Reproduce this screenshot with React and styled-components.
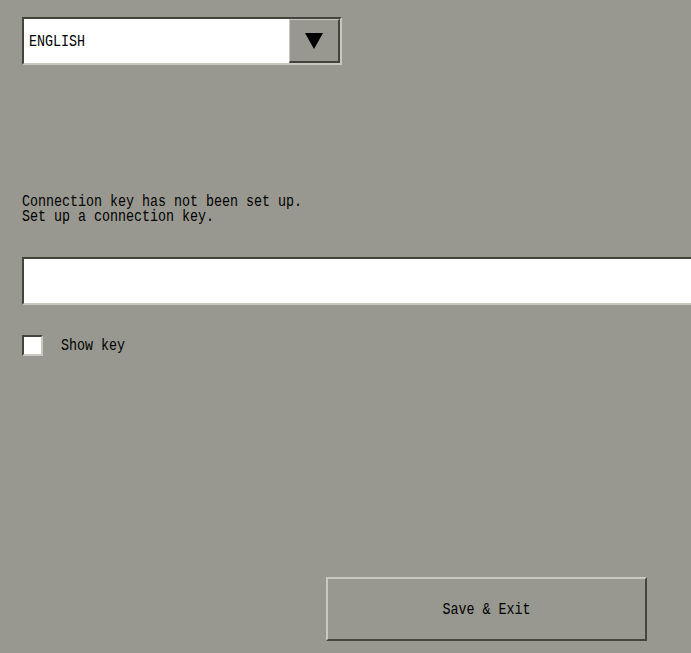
import React from "react";
import styled, { createGlobalStyle } from "styled-components";

const bg = "#989890";
const dark = "#44443c";
const light = "#c8c8c0";

const GlobalStyle = createGlobalStyle`
  html, body {
    margin: 0;
    padding: 0;
    background: ${bg};
  }
  body {
    font-family: "Liberation Mono", "DejaVu Sans Mono", monospace;
    color: #000;
  }
`;

// 화면 전체
const Page = styled.div`
  width: 691px;
  height: 653px;
  box-sizing: border-box;
  padding: 17px 0 12px 22px;
  overflow: hidden;
  display: flex;
  flex-direction: column;
  align-items: flex-start;
`;

// 세로로 늘린 글자 (패널 폰트 흉내)
const Tall = styled.span`
  display: inline-block;
  font-size: 13.33px;
  line-height: 12px;
  height: 12px;
  white-space: pre;
  transform: translateY(1px) scaleY(1.3);
  transform-origin: center;
`;

// 언어 선택 드롭다운
const Select = styled.div`
  width: 320px;
  height: 48px;
  box-sizing: border-box;
  display: flex;
  border-style: solid;
  border-width: 2px;
  border-color: ${dark} ${light} ${light} ${dark};
`;

const SelectValue = styled.div`
  flex: 1;
  background: #fff;
  display: flex;
  align-items: center;
  padding-left: 5px;
`;

const SelectButton = styled.div`
  width: 51px;
  box-sizing: border-box;
  background: ${bg};
  border-style: solid;
  border-width: 1px 2px 2px 1px;
  border-color: ${light} ${dark} ${dark} ${light};
  display: flex;
  align-items: center;
  justify-content: center;
`;

// 안내 문구 (두 줄)
const Message = styled.div`
  margin-top: 129px;
  font-size: 13.33px;
  line-height: 12.3px;
  white-space: pre;
  transform: scaleY(1.3);
  transform-origin: top left;
`;

// 키 입력란
const KeyField = styled.div`
  margin-top: 38px;
  width: 700px;
  height: 48px;
  flex-shrink: 0;
  box-sizing: border-box;
  background: #fff;
  border-style: solid;
  border-width: 2px 0 2px 2px;
  border-color: ${dark} ${light} ${light} ${dark};
`;

const CheckRow = styled.div`
  margin-top: 30px;
  display: flex;
  align-items: center;
  gap: 18px;
`;

const CheckBox = styled.div`
  width: 21px;
  height: 21px;
  box-sizing: border-box;
  background: #fff;
  border-style: solid;
  border-width: 2px;
  border-color: ${dark} ${light} ${light} ${dark};
`;

// 저장 버튼
const SaveButton = styled.div`
  margin-top: auto;
  margin-left: 304px;
  width: 321px;
  height: 64px;
  box-sizing: border-box;
  background: ${bg};
  border-style: solid;
  border-width: 2px;
  border-color: ${light} ${dark} ${dark} ${light};
  display: flex;
  align-items: center;
  justify-content: center;
`;

const App = () => {
  return (
    <>
      <GlobalStyle />
      <Page>
        <Select>
          <SelectValue>
            <Tall>ENGLISH</Tall>
          </SelectValue>
          <SelectButton>
            <svg width="18" height="16" viewBox="0 0 18 16">
              <polygon points="0,0 18,0 9,16" fill="#000" />
            </svg>
          </SelectButton>
        </Select>

        <Message>
          Connection key has not been set up.
          <br />
          Set up a connection key.
        </Message>

        <KeyField />

        <CheckRow>
          <CheckBox />
          <Tall>Show key</Tall>
        </CheckRow>

        <SaveButton>
          <Tall>Save &amp; Exit</Tall>
        </SaveButton>
      </Page>
    </>
  );
};

export default App;
